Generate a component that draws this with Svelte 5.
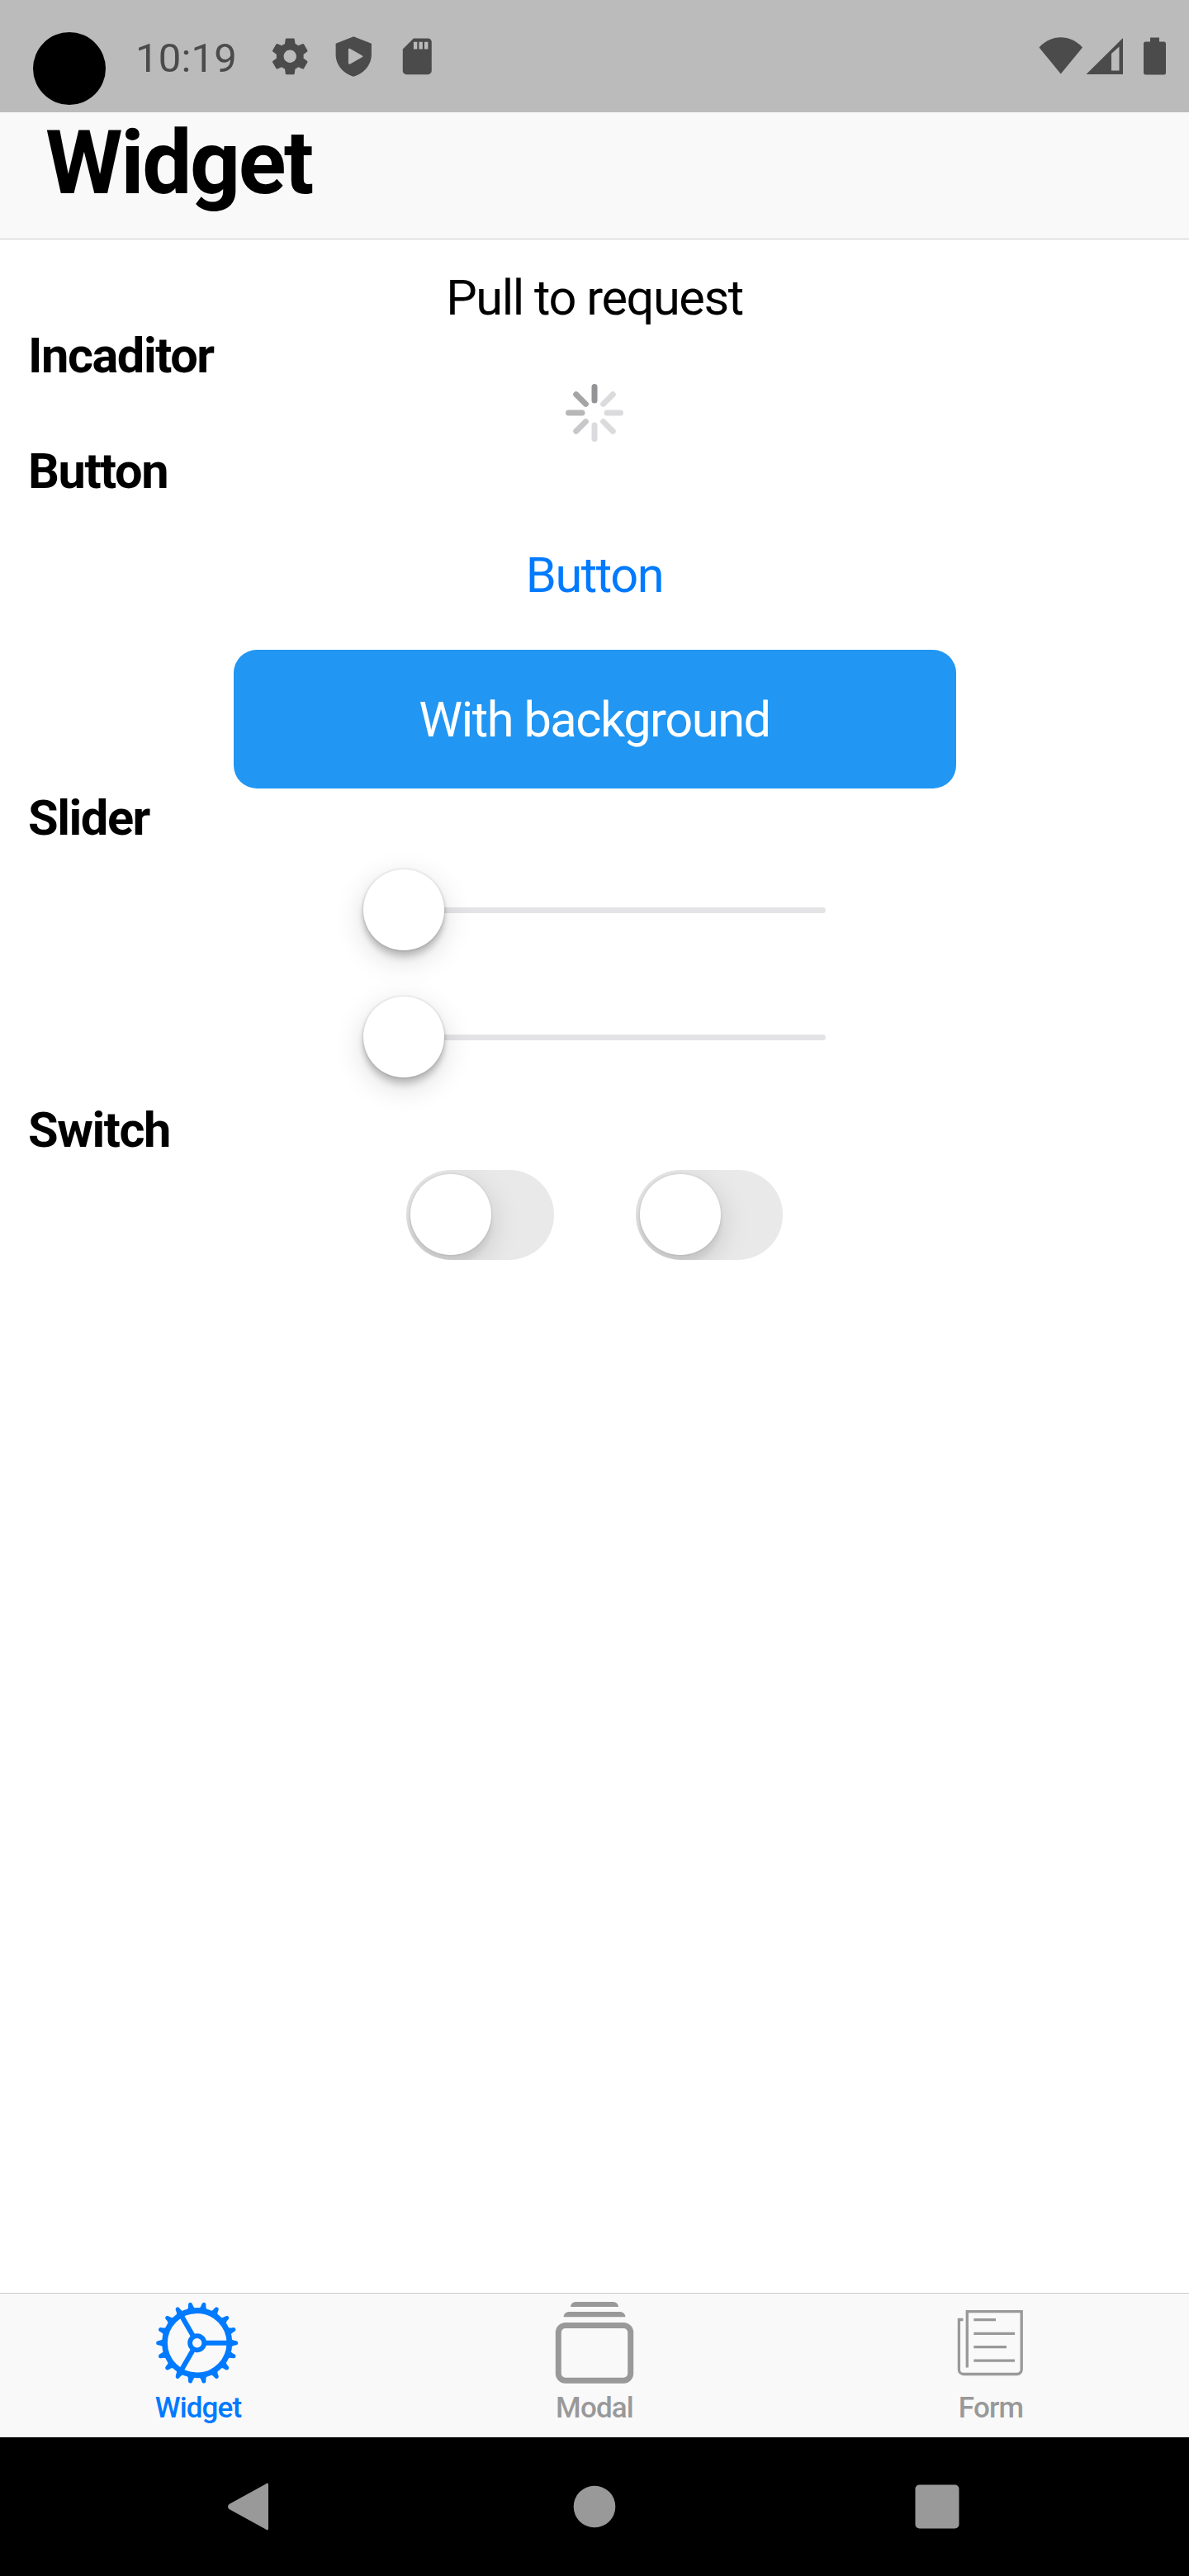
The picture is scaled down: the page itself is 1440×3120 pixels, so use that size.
<script>
  const teeth = Array.from({ length: 18 }, (_, i) => i * 20);
  const ticks = ['#949496', '#dbdbdd', '#dbdbdd', '#dbdbdd', '#dbdbdd', '#c8c8ca', '#b7b7b9', '#a5a5a7'];
  const sliders = ['first', 'second'];
  const switches = ['first', 'second'];
</script>

<div class="screen">
  <header class="status">
    <span class="camera"></span>
    <span class="time">10:19</span>
    <div class="notices">
      <svg viewBox="0 0 24 24"><path d="M19.43 12.98c.04-.32.07-.64.07-.98s-.03-.66-.07-.98l2.11-1.65c.19-.15.24-.42.12-.64l-2-3.46c-.12-.22-.39-.3-.61-.22l-2.49 1c-.52-.4-1.08-.73-1.69-.98l-.38-2.65C14.46 2.18 14.25 2 14 2h-4c-.25 0-.46.18-.49.42l-.38 2.65c-.61.25-1.17.59-1.69.98l-2.49-1c-.23-.09-.49 0-.61.22l-2 3.46c-.13.22-.07.49.12.64l2.11 1.65c-.04.32-.07.65-.07.98s.03.66.07.98l-2.11 1.65c-.19.15-.24.42-.12.64l2 3.46c.12.22.39.3.61.22l2.49-1c.52.4 1.08.73 1.69.98l.38 2.65c.03.24.24.42.49.42h4c.25 0 .46-.18.49-.42l.38-2.65c.61-.25 1.17-.59 1.69-.98l2.49 1c.23.09.49 0 .61-.22l2-3.46c.12-.22.07-.49-.12-.64l-2.11-1.65zM12 15.500c-1.930 0-3.500-1.570-3.500-3.500s1.570-3.500 3.500-3.500 3.500 1.570 3.500 3.500-1.570 3.500-3.500 3.500z" /></svg>
      <svg viewBox="0 0 24 24"><path fill-rule="evenodd" d="M12 1 2.100 4.900V11c0 5.600 4.200 10.700 9.900 12.200 5.700-1.500 9.900-6.600 9.900-12.200V4.900zM9.100 8.300c0-.6.500-.8 1-.5l6.600 3.700c.5.300.5.700 0 1l-6.600 3.700c-.5.300-1 .1-1-.5z" /></svg>
      <svg viewBox="0 0 24 24"><path d="M18 2h-8L4.020 8 4 20c0 1.100.9 2 2 2h12c1.100 0 2-.9 2-2V4c0-1.100-.9-2-2-2zm-6 6h-2V4h2v4zm3 0h-2V4h2v4zm3 0h-2V4h2v4z" /></svg>
    </div>
    <svg class="system" viewBox="0 0 156 48">
      <path d="M0.500 13.500C15-2.800 38.500-2.800 53 13.500L26.700 45.500z" />
      <path fill-rule="evenodd" d="M57.500 46 102 2V46zM88 21V41.500H97.500V12.500z" />
      <path d="M135 1.500h11v5h5.500a2.500 2.500 0 0 1 2.500 2.500v35a2.500 2.500 0 0 1-2.500 2.500h-22a2.500 2.500 0 0 1-2.500-2.500V9a2.500 2.500 0 0 1 2.500-2.500h5.500z" />
    </svg>
  </header>

  <div class="title"><h1>Widget</h1></div>

  <main>
    <p class="pull">Pull to request</p>
    <h2>Incaditor</h2>
    <svg class="spinner" viewBox="-35 -34 70 70">
      {#each ticks as color, i}
        <rect x="-3.5" y="-35" width="7" height="23.500" rx="3.500" fill={color} transform="rotate({i * 45})" />
      {/each}
    </svg>
    <h2>Button</h2>
    <button class="plain">Button</button>
    <button class="filled">With background</button>
    <h2 class="lowered">Slider</h2>
    {#each sliders as name (name)}
      <div class="slider"><span class="knob"></span><span class="rail"></span></div>
    {/each}
    <h2 class="lowered">Switch</h2>
    <div class="switches">
      {#each switches as name (name)}
        <div class="switch"><span class="knob"></span></div>
      {/each}
    </div>
  </main>

  <nav class="tabs">
    <div class="tab active">
      <svg viewBox="0 0 104 104">
        <g transform="translate(50.700 51.700)">
          {#each teeth as angle}
            <path transform="rotate({angle})" fill="currentColor" d="M39-6.500Q42.500-2.900 47.500-2.500 49.600-2 49.600 0T47.500 2.500Q42.500 2.900 39 6.500z" />
          {/each}
          <g fill="none" stroke="currentColor">
            <circle r="39.200" stroke-width="6.800" />
            <circle r="8.600" stroke-width="5.800" />
            <path stroke-width="6" d="M10.500 0H38M-5.250-9.090-19-32.900M-5.250 9.090-19 32.900" />
          </g>
        </g>
      </svg>
      <span>Widget</span>
    </div>
    <div class="tab">
      <svg viewBox="0 0 104 104">
        <g fill="currentColor">
          <path d="M23 8c.5-4 3-6 7-6h44c4 0 6.500 2 7 6z" />
          <path d="M14.500 20.200c.5-4 3-6.200 7-6.200h61c4 0 6.500 2.200 7 6.200z" />
        </g>
        <rect x="8.300" y="30.500" width="87.400" height="66.800" rx="8.500" fill="none" stroke="currentColor" stroke-width="7" />
      </svg>
      <span>Modal</span>
    </div>
    <div class="tab">
      <svg viewBox="0 0 104 104">
        <path fill="none" stroke="currentColor" stroke-width="3.300" d="M18.500 23.500H13.400V84a5.500 5.500 0 0 0 5.500 5.500H83.500A5.500 5.500 0 0 0 89.200 84V13.700H23.300V81.500M31.300 23.700H58M31.300 40.300H81M31.300 56.700H71M31.300 73.200H81" />
      </svg>
      <span>Form</span>
    </div>
  </nav>

  <footer>
    <svg viewBox="0 0 56 60"><path d="M46 2.500Q49 0 49 4V56Q49 60 46 57.500L1.500 33Q-1.500 30 1.500 27z" /></svg>
    <svg viewBox="0 0 56 60"><circle cx="28" cy="30" r="25.300" /></svg>
    <svg viewBox="0 0 56 60"><rect x="1.500" y="3.500" width="53" height="53" rx="5" /></svg>
  </footer>
</div>

<style>
  :global(body) {
    margin: 0;
    background: #fff;
  }
  .screen {
    width: 1440px;
    height: 3120px;
    display: flex;
    flex-direction: column;
    overflow: hidden;
    font-family: Roboto, 'Liberation Sans', sans-serif;
    color: #000;
  }
  h1, h2, p {
    margin: 0;
  }
  svg {
    display: block;
    flex: none;
  }
  .status {
    height: 136px;
    box-sizing: border-box;
    padding: 0 26px 0 40px;
    display: flex;
    align-items: flex-start;
    background: #bbb;
    color: #4b4b4b;
  }
  .camera {
    width: 88px;
    height: 88px;
    margin-top: 39px;
    border-radius: 50%;
    background: #000;
  }
  .time {
    margin: 42px 0 0 36px;
    width: 161px;
    font-size: 49px;
    line-height: 57px;
    letter-spacing: 0.2px;
  }
  .notices {
    display: flex;
    gap: 24.500px;
    margin-top: 42px;
  }
  .notices svg {
    width: 52.500px;
    height: 52.500px;
    fill: #4b4b4b;
  }
  .system {
    width: 156px;
    height: 48px;
    margin: 44px 0 0 auto;
    fill: #4b4b4b;
  }
  .title {
    height: 154px;
    box-sizing: border-box;
    padding: 0 55px;
    background: #f9f9f9;
    border-bottom: 1px solid #ccc;
  }
  h1 {
    font-size: 107px;
    line-height: 123px;
    font-weight: 700;
    letter-spacing: -2.400px;
  }
  main {
    flex: 1;
    padding-top: 36px;
    display: flex;
    flex-direction: column;
    align-items: center;
    font-size: 59.500px;
    line-height: 70px;
    letter-spacing: -1.435px;
  }
  h2 {
    align-self: stretch;
    height: 70px;
    box-sizing: border-box;
    padding-left: 34px;
    font-size: inherit;
    font-weight: 700;
  }
  .lowered {
    padding-top: 1px;
  }
  .spinner {
    width: 70px;
    height: 70px;
    overflow: visible;
  }
  button {
    border: 0;
    background: none;
    font: inherit;
    letter-spacing: inherit;
  }
  .plain {
    padding: 56px;
    color: #007aff;
  }
  .filled {
    margin-top: -1px;
    width: 875px;
    height: 168px;
    padding: 2px 0 0;
    border-radius: 28px;
    background: #2196f3;
    color: #fff;
  }
  .slider {
    width: 560px;
    height: 154px;
    display: flex;
    align-items: center;
  }
  .knob {
    width: 98px;
    height: 98px;
    border-radius: 50%;
    background: #fff;
    flex: none;
    box-shadow: 0 0 0 1.750px rgba(0, 0, 0, 0.04), 0 10.500px 36px rgba(0, 0, 0, 0.15), 0 10.500px 7.500px rgba(0, 0, 0, 0.06);
  }
  .slider .knob {
    position: relative;
    box-shadow: 0 0 0 1.750px rgba(0, 0, 0, 0.04), 0 10.500px 36px rgba(0, 0, 0, 0.15), 0 3.500px 7.500px rgba(0, 0, 0, 0.16), 0 10.500px 7.500px rgba(0, 0, 0, 0.1);
  }
  .rail {
    flex: 1;
    height: 7px;
    border-radius: 0 3.500px 3.500px 0;
    background: #e4e4e6;
  }
  .switches {
    display: flex;
    gap: 99px;
    padding-top: 14px;
  }
  .switch {
    width: 178.500px;
    height: 108.500px;
    box-sizing: border-box;
    padding: 5.250px;
    border-radius: 54.250px;
    background: #e9e9ea;
    overflow: hidden;
    display: flex;
  }
  .tabs {
    height: 175px;
    box-sizing: border-box;
    display: grid;
    grid-template-columns: repeat(3, 1fr);
    background: #f9f9f9;
    border-top: 1px solid #ccc;
  }
  .tab {
    display: flex;
    flex-direction: column;
    align-items: center;
    padding-top: 8px;
    gap: 6px;
    color: #999;
    font-size: 35px;
    line-height: 41px;
    font-weight: 500;
    letter-spacing: -0.840px;
  }
  .tab svg {
    width: 104px;
    height: 104px;
  }
  .active {
    color: #007aff;
  }
  footer {
    height: 168px;
    box-sizing: border-box;
    padding: 0 277px 0 276px;
    display: flex;
    align-items: center;
    justify-content: space-between;
    background: #000;
  }
  footer svg {
    width: 56px;
    height: 60px;
    fill: #999;
  }
</style>
